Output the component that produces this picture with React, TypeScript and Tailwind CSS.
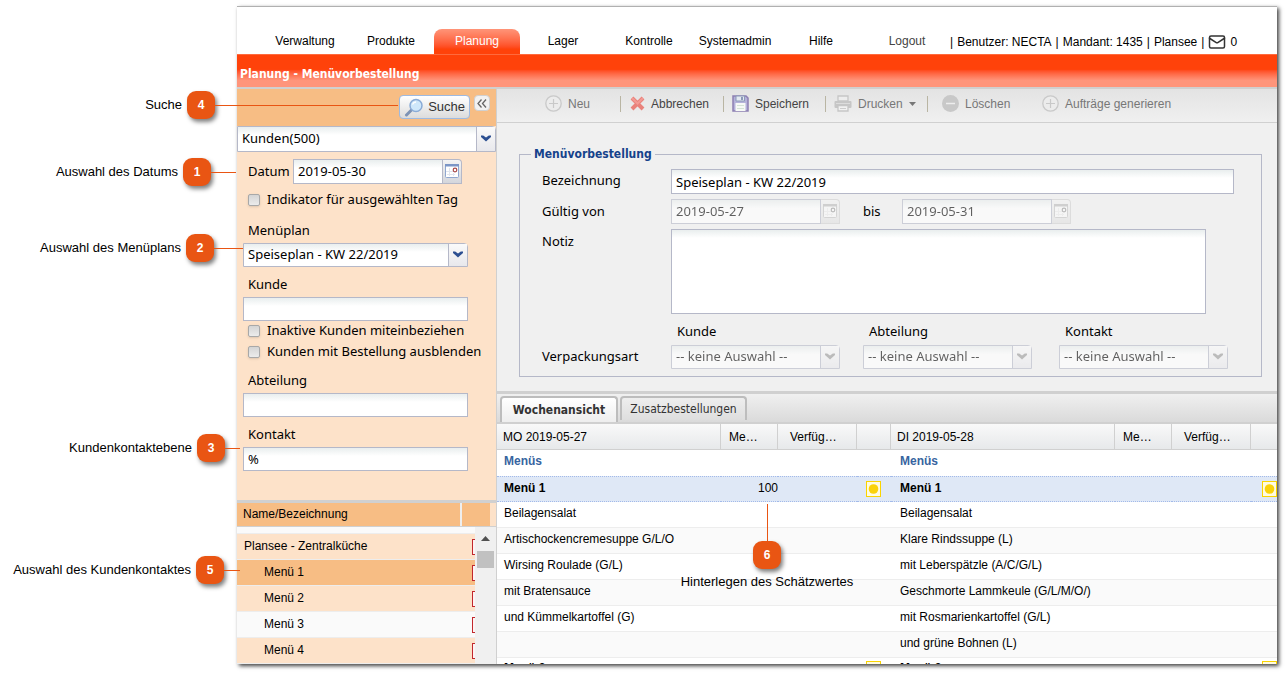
import { Mail } from "lucide-react"
import clsx from "clsx"

const NAV = ["Verwaltung", "Produkte", "Planung", "Lager", "Kontrolle", "Systemadmin", "Hilfe"]

const SESSION = ["|", "Benutzer: NECTA", "|", "Mandant: 1435", "|", "Plansee", "|"]

const MENU_ROWS = [
    ["Beilagensalat", "Beilagensalat"],
    ["Artischockencremesuppe G/L/O", "Klare Rindssuppe (L)"],
    ["Wirsing Roulade (G/L)", "mit Leberspätzle (A/C/G/L)"],
    ["mit Bratensauce", "Geschmorte Lammkeule (G/L/M/O/)"],
    ["und Kümmelkartoffel (G)", "mit Rosmarienkartoffel (G/L)"],
    ["", "und grüne Bohnen (L)"],
]

const CONTACTS = [
    { name: "Plansee - Zentralküche", row: "bg-[#fde2c9]", cell: "pl-[7px]" },
    { name: "Menü 1", row: "bg-[#f7bd84]", cell: "pl-[27px]" },
    { name: "Menü 2", row: "bg-[#fde2c9]", cell: "pl-[27px]" },
    { name: "Menü 3", row: "bg-[#fafafa]", cell: "pl-[27px]" },
    { name: "Menü 4", row: "bg-[#fde2c9]", cell: "pl-[27px]" },
]

const field = "border border-[#b5b8c8] bg-white bg-linear-to-b from-[#e9eeee] to-white to-[8px] px-1 text-black outline-none"

function Chevron() {
    return (
        <svg width="10" height="7" viewBox="0 0 10 7" fill="currentColor">
            <path d="M0 0.500h2.200L5 2.600 7.800 0.500H10v1.400L5 6.500 0 1.900z" />
        </svg>
    )
}

function CalendarIcon() {
    return (
        <svg width="14" height="14" viewBox="0 0 14 14">
            <rect x="0.500" y="0.500" width="13" height="13" rx="1" fill="#fff" stroke="#8fa6cf" />
            <path d="M0 0h14v2.500H0z" fill="#7c96c6" />
            <path d="M4.500 4v8M1 7.500h8M8.500 9v3M2 10.500h8" stroke="#e1e5ee" />
            <circle cx="10" cy="6" r="1.800" fill="#fff" stroke="#a94a4a" strokeWidth="1.200" />
        </svg>
    )
}

function DateField({ id, value, disabled }: { id: string; value: string; disabled?: boolean }) {
    return (
        <div className={clsx("flex h-[25px] w-[169px]", disabled && "opacity-60")}>
            <input id={id} defaultValue={value} disabled={disabled} className={clsx(field, "min-w-0 flex-1")} />
            <button
                type="button"
                aria-label="Kalender"
                disabled={disabled}
                className={clsx(
                    "flex w-[19px] items-start justify-center rounded-tr-sm border border-l-0 border-[#b5b8c8] bg-linear-to-b from-[#f4f4f4] to-[#d4d6dc] pt-1",
                    disabled && "opacity-60 grayscale"
                )}
            >
                <CalendarIcon />
            </button>
        </div>
    )
}

function SelectField({ id, value, className, disabled }: { id: string; value: string; className?: string; disabled?: boolean }) {
    return (
        <div className={clsx("relative h-6", className, disabled && "opacity-60")}>
            <select id={id} aria-label={value} disabled={disabled} className={clsx(field, "h-full w-full appearance-none rounded-tr-sm opacity-100")}>
                <option>{value}</option>
            </select>
            <span
                className={clsx(
                    "pointer-events-none absolute inset-y-px right-px flex w-[19px] items-center justify-center border-l border-[#b5b8c8] bg-linear-to-b from-[#fafafa] to-[#e8e8ec] pb-[2px]",
                    disabled ? "text-[#999]" : "text-[#2c4f91]"
                )}
            >
                <Chevron />
            </span>
        </div>
    )
}

function Check({ label }: { label: string }) {
    return (
        <label className="flex h-[21px] items-center gap-[7px] pb-[2px] pl-[5px] whitespace-nowrap">
            <input
                type="checkbox"
                className="size-3 flex-none appearance-none rounded-xs border border-[#a8a8a8] bg-linear-to-b from-[#d4d4d4] to-[#ececec] shadow-sm"
            />
            {label}
        </label>
    )
}

function FieldLabel({ htmlFor, children }: { htmlFor: string; children: string }) {
    return (
        <label htmlFor={htmlFor} className="mb-[2px] flex h-[21px] items-center pl-[5px]">
            {children}
        </label>
    )
}

function PlusIcon() {
    return (
        <svg width="17" height="17" viewBox="0 0 17 17" fill="none" stroke="#c9c9c9">
            <circle cx="8.500" cy="8.500" r="7.700" strokeWidth="1.300" fill="#ececec" />
            <path d="M8.500 4v9M4 8.500h9" strokeWidth="1.200" />
        </svg>
    )
}

function MinusIcon() {
    return (
        <svg width="17" height="17" viewBox="0 0 17 17">
            <circle cx="8.500" cy="8.500" r="8.500" fill="#c8c8c8" />
            <path d="M4 8.500h9" stroke="#ededed" strokeWidth="1.500" />
        </svg>
    )
}

function CancelIcon() {
    return (
        <svg width="15" height="15" viewBox="0 0 15 15">
            <path d="M2 2l11 11M13 2L2 13" stroke="#e9827b" strokeWidth="4" />
            <path d="M2 2l5.500 5.500L13 2" stroke="#f39a94" strokeWidth="2" fill="none" />
        </svg>
    )
}

function SaveIcon() {
    return (
        <svg width="17" height="17" viewBox="0 0 17 17">
            <path d="M1 1h13l2 2v13H1z" fill="#b5b2da" stroke="#8d80b3" strokeWidth="1.500" />
            <path d="M4 1h8.500v5H4z" fill="#e3e9f1" stroke="#8c9ab8" />
            <path d="M9 2h2v3H9z" fill="#8c9ab8" />
            <path d="M3.500 8h10v8h-10z" fill="#f6f9f6" />
            <path d="M5 10.500h7M5 13.500h7" stroke="#d3e2d5" />
        </svg>
    )
}

function PrintIcon() {
    return (
        <svg width="18" height="17" viewBox="0 0 18 17">
            <path d="M4 1h10v5H4z" fill="#ededed" stroke="#c6c6c6" strokeWidth="1.300" />
            <rect x="0.500" y="6" width="17" height="7" rx="1" fill="#c6c6c6" />
            <path d="M2 8.500h14" stroke="#dcdcdc" />
            <path d="M4 10.500h10V16H4z" fill="#f1f1f1" stroke="#c6c6c6" strokeWidth="1.300" />
            <path d="M6 13.500h6" stroke="#cccccc" />
        </svg>
    )
}

function SearchIcon() {
    return (
        <svg width="20" height="19" viewBox="0 0 20 19">
            <path d="M7.500 12L2.500 17" stroke="#7d93b5" strokeWidth="3" strokeLinecap="round" />
            <circle cx="12" cy="7.500" r="6" fill="#cfe8fb" stroke="#8aabd6" strokeWidth="1.500" />
            <path d="M8.500 6.500a4 4 0 0 1 3.500-2.500" stroke="#fff" strokeWidth="1.300" fill="none" />
        </svg>
    )
}

function Divider() {
    return <span className="h-4 w-px bg-[#b9b5a3]" />
}

function YellowDot() {
    return (
        <svg width="15" height="16" viewBox="0 0 15 16">
            <rect x="0.500" y="0.500" width="14" height="15" fill="#fffbe0" stroke="#fad400" />
            <circle cx="7.500" cy="8" r="4.800" fill="#fad20a" />
        </svg>
    )
}

function Toolbar() {
    const btn = "flex h-full items-center gap-[6px] whitespace-nowrap"
    return (
        <div className="flex h-[34px] flex-none items-center border-b border-[#d0d0d0] bg-linear-to-b from-[#e3e3e3] to-[#f0f0f0] pb-[4px] pl-12 text-[12px] text-[#777]">
            <button type="button" className={clsx(btn, "w-[75px]")}><PlusIcon />Neu</button>
            <Divider />
            <button type="button" className={clsx(btn, "w-[102px] pl-[9px] text-[#444]")}><CancelIcon />Abbrechen</button>
            <Divider />
            <button type="button" className={clsx(btn, "w-[101px] pl-[8px] text-[#444]")}><SaveIcon />Speichern</button>
            <Divider />
            <button type="button" className={clsx(btn, "w-[101px] pl-[8px]")}>
                <PrintIcon />Drucken
                <svg width="7" height="4" viewBox="0 0 7 4" fill="#777"><path d="M0 0h7L3.500 4z" /></svg>
            </button>
            <Divider />
            <button type="button" className={clsx(btn, "w-[114px] pl-[14px]")}><MinusIcon />Löschen</button>
            <button type="button" className={btn}><PlusIcon />Aufträge generieren</button>
        </div>
    )
}

function SearchPanel() {
    return (
        <div className="flex-none bg-[#fde2c9]">
            <div className="flex h-[37px] items-start justify-end gap-[4px] bg-[#f7bd84] pt-[6px] pr-[6px]">
                <button
                    type="button"
                    className="flex h-6 items-center gap-1 rounded-sm border border-[#9ebae1] bg-linear-to-b from-white to-[#dcdcdc] px-1 font-['Liberation_Sans',Arial,sans-serif] text-[13px] text-[#333]"
                >
                    <SearchIcon />Suche
                </button>
                <button
                    type="button"
                    aria-label="Einklappen"
                    className="flex size-4 items-center justify-center rounded-sm border border-[#d0d0d0] bg-[#f2f2f2]"
                >
                    <svg width="10" height="9" viewBox="0 0 10 9" fill="none" stroke="#666" strokeWidth="1.300">
                        <path d="M4.500 0.500l-3.500 4 3.500 4M9 0.500l-3.500 4 3.500 4" />
                    </svg>
                </button>
            </div>
            <SelectField id="filter" value="Kunden(500)" className="h-[26px]" />
            <div className="pt-[7px] pr-7 pb-[29px] pl-[6px]">
                <div className="flex items-center justify-between pr-[6px] pl-[5px]">
                    <label htmlFor="datum">Datum</label>
                    <DateField id="datum" value="2019-05-30" />
                </div>
                <div className="mt-[6px]"><Check label="Indikator für ausgewählten Tag" /></div>
                <div className="mt-[9px]">
                    <FieldLabel htmlFor="menueplan">Menüplan</FieldLabel>
                    <SelectField id="menueplan" value="Speiseplan - KW 22/2019" />
                </div>
                <div className="mt-[7px]">
                    <FieldLabel htmlFor="kunde">Kunde</FieldLabel>
                    <input id="kunde" className={clsx(field, "block h-6 w-full")} />
                </div>
                <Check label="Inaktive Kunden miteinbeziehen" />
                <Check label="Kunden mit Bestellung ausblenden" />
                <div className="mt-[7px]">
                    <FieldLabel htmlFor="abteilung">Abteilung</FieldLabel>
                    <input id="abteilung" className={clsx(field, "block h-6 w-full")} />
                </div>
                <div className="mt-[7px]">
                    <FieldLabel htmlFor="kontakt">Kontakt</FieldLabel>
                    <input id="kontakt" defaultValue="%" className={clsx(field, "block h-6 w-full")} />
                </div>
            </div>
        </div>
    )
}

function ContactList() {
    return (
        <div className="flex min-h-0 flex-1 flex-col border-t-[3px] border-[#d0d0d0] bg-[#fde2c9] font-['Liberation_Sans',Arial,sans-serif] text-[12px]">
            <div className="flex h-6 flex-none items-center border-b border-[#d0d0d0] pr-[6px]">
                <div className="flex h-full flex-1 items-center border-r-2 border-[#eee] bg-[#f7bd84] pb-[2px] pl-[6px]">Name/Bezeichnung</div>
                <div className="h-full w-7 bg-[#f7bd84]" />
            </div>
            <div className="flex min-h-0 flex-1 overflow-hidden">
                <table className="min-w-0 flex-1 border-collapse self-start">
                    <tbody className="block">
                        <tr className="flex h-[7px] border-b border-[#ededed] bg-[#fafafa]">
                            <td className="flex-1" />
                        </tr>
                        {CONTACTS.map((c) => (
                            <tr key={c.name} className={clsx("flex h-[26px] items-center border-b border-[#ededed]", c.row)}>
                                <td className={clsx("flex-1 pb-px", c.cell)}>{c.name}</td>
                                <td className="h-4 w-[3px] border-y border-l border-[#c1272d] bg-[#fdf3f3]" />
                            </tr>
                        ))}
                    </tbody>
                </table>
                <div className="flex w-[21px] flex-col items-center gap-[10px] bg-[#f0f0f0] pt-[9px]">
                    <svg width="9" height="5" viewBox="0 0 9 5" fill="#505050"><path d="M4.500 0L9 5H0z" /></svg>
                    <div className="h-[17px] w-[17px] bg-[#c1c1c1]" />
                </div>
            </div>
        </div>
    )
}

function OrderForm() {
    return (
        <div className="flex-none bg-[#f0f0f0] pt-[23px] pr-[15px] pb-[14px] pl-[22px] font-['Noto_Sans',sans-serif] text-[13px]">
            <fieldset className="border border-[#b5b8c8] pr-[27px] pb-[7px] pl-[22px]">
                <legend className="-ml-[11px] px-[3px] font-['DejaVu_Sans_Condensed','DejaVu_Sans',sans-serif] text-[12px] leading-4 font-bold text-[#15428b]">
                    Menüvorbestellung
                </legend>
                <div className="mt-[7px] grid grid-cols-[129px_1fr] gap-y-[5px]">
                    <label htmlFor="bezeichnung" className="leading-[22px]">Bezeichnung</label>
                    <input id="bezeichnung" defaultValue="Speiseplan - KW 22/2019" className={clsx(field, "h-[25px]")} />
                    <label htmlFor="von" className="leading-6">Gültig von</label>
                    <div className="flex">
                        <DateField id="von" value="2019-05-27" disabled />
                        <label htmlFor="bis" className="w-[62px] pl-[23px] leading-6">bis</label>
                        <DateField id="bis" value="2019-05-31" disabled />
                    </div>
                    <label htmlFor="notiz" className="leading-6">Notiz</label>
                    <textarea id="notiz" className={clsx(field, "mr-7 h-[85px] resize-none")} />
                    <span />
                    <div className="grid h-[21px] grid-cols-[192px_196px_169px] pl-[6px] leading-6">
                        <span>Kunde</span>
                        <span>Abteilung</span>
                        <span>Kontakt</span>
                    </div>
                    <label htmlFor="vp-kunde" className="leading-[22px]">Verpackungsart</label>
                    <div className="grid grid-cols-[192px_196px_169px]">
                        <SelectField id="vp-kunde" value="-- keine Auswahl --" className="w-[169px]" disabled />
                        <SelectField id="vp-abteilung" value="-- keine Auswahl --" className="w-[169px]" disabled />
                        <SelectField id="vp-kontakt" value="-- keine Auswahl --" className="w-[169px]" disabled />
                    </div>
                </div>
            </fieldset>
        </div>
    )
}

function WeekTable() {
    const cell = "border-b border-[#ededed] pb-[3px] whitespace-nowrap"
    return (
        <table className="w-[788px] min-w-full table-fixed border-separate border-spacing-0 text-[12px]">
            <thead>
                <tr className="h-[26px] bg-linear-to-b from-[#f9f9f9] to-[#e6e8ea] text-left">
                    {["MO 2019-05-27", "DI 2019-05-28"].map((day) => [
                        <th key={day} className="w-[224px] border-r border-b border-[#d0d0d0] pl-[6px] font-normal">{day}</th>,
                        <th key={day + "m"} className="w-[57px] border-r border-b border-[#d0d0d0] pl-2 font-normal">Me…</th>,
                        <th key={day + "v"} className="w-[79px] border-r border-b border-[#d0d0d0] pl-3 font-normal">Verfüg…</th>,
                        <th key={day + "s"} className="w-[34px] border-r border-b border-[#d0d0d0]" />,
                    ])}
                </tr>
            </thead>
            <tbody>
                <tr className="h-[26px] bg-white font-bold text-[#3764a0]">
                    <td colSpan={4} className="pb-1 pl-[7px]">Menüs</td>
                    <td colSpan={4} className="pb-1 pl-[9px]">Menüs</td>
                </tr>
                <tr className="h-[26px] bg-[#dfe8f6] *:border-y *:border-dotted *:border-[#a3bae9]">
                    <td className="pb-[3px] pl-[7px] font-bold">Menü 1</td>
                    <td className="pb-[3px] text-right">100</td>
                    <td />
                    <td className="pl-[9px]"><YellowDot /></td>
                    <td className="pb-[3px] pl-[9px] font-bold">Menü 1</td>
                    <td />
                    <td />
                    <td className="pl-[11px]"><YellowDot /></td>
                </tr>
                {MENU_ROWS.map(([mo, di]) => (
                    <tr key={di} className="h-[26px] even:bg-[#fafafa]">
                        <td colSpan={4} className={clsx(cell, "pl-[7px]")}>{mo}</td>
                        <td colSpan={4} className={clsx(cell, "pl-[9px]")}>{di}</td>
                    </tr>
                ))}
                <tr className="h-[26px] bg-white align-top *:pt-[3px] *:leading-[14px]">
                    <td className="pl-[7px] font-bold">Menü 2</td>
                    <td />
                    <td />
                    <td className="pl-[9px]"><YellowDot /></td>
                    <td className="pl-[9px] font-bold">Menü 2</td>
                    <td />
                    <td />
                    <td className="pl-[11px]"><YellowDot /></td>
                </tr>
            </tbody>
        </table>
    )
}

function Badge({ n }: { n: number }) {
    return (
        <span className="flex size-7 flex-none items-center justify-center rounded-[9px] bg-[#e95513] text-[12px] font-bold text-white shadow-[2px_3px_4px_rgba(0,0,0,0.5)]">
            {n}
        </span>
    )
}

const CALLOUTS = [
    { n: 4, text: "Suche", box: "top-[91px] w-[398px]", line: "w-[183px]" },
    { n: 1, text: "Auswahl des Datums", box: "top-[158px] w-[236px]", line: "w-[25px]" },
    { n: 2, text: "Auswahl des Menüplans", box: "top-[234px] w-[243px]", line: "w-[29px]" },
    { n: 3, text: "Kundenkontaktebene", box: "top-[434px] w-[240px]", line: "w-[15px]" },
    { n: 5, text: "Auswahl des Kundenkontaktes", box: "top-[556px] w-[240px]", line: "w-[16px]" },
]

function Callouts() {
    return (
        <div className="pointer-events-none text-[13px] text-black">
            {CALLOUTS.map((c) => (
                <div key={c.n} className={clsx("absolute left-0 flex h-7 items-center justify-end whitespace-nowrap", c.box)}>
                    <span className="mr-[5px]">{c.text}</span>
                    <Badge n={c.n} />
                    <span className={clsx("h-px flex-none bg-[#e95513]", c.line)} />
                </div>
            ))}
            <div className="absolute top-[504px] left-[667px] flex w-[200px] flex-col items-center whitespace-nowrap">
                <span className="h-[37px] w-px bg-[#e95513]" />
                <Badge n={6} />
                <span className="mt-1 leading-[18px]">Hinterlegen des Schätzwertes</span>
            </div>
        </div>
    )
}

export default function App() {
    return (
        <div className="relative h-screen overflow-hidden bg-white pt-[6px] pr-[9px] pb-[9px] pl-[237px] font-['Liberation_Sans',Arial,sans-serif] text-black">
            <div className="flex h-full flex-col overflow-hidden border-t border-[#b0b0b0] bg-white shadow-[2px_2px_4px_rgba(0,0,0,0.75)]">
                <header className="flex h-[47px] flex-none items-end pl-[25px] text-[12px] whitespace-nowrap">
                    <nav className="flex">
                        {NAV.map((item) => (
                            <a
                                key={item}
                                href="#"
                                className={clsx(
                                    "flex h-[25px] w-[86px] items-center justify-center pb-[2px]",
                                    item === "Planung" && "rounded-t-lg bg-linear-to-b from-[#ff9478] to-[#ff420a] to-80% text-white"
                                )}
                            >
                                {item}
                            </a>
                        ))}
                        <a href="#" className="flex h-[25px] w-[86px] items-center justify-center pb-[2px] text-[#444]">Logout</a>
                    </nav>
                    <div className="flex h-[25px] items-center gap-1">
                        {SESSION.map((part, i) => (
                            <span key={i}>{part}</span>
                        ))}
                        <Mail className="size-[18px] text-[#333]" />
                        <span>0</span>
                    </div>
                </header>
                <h1 className="flex h-[33px] flex-none items-center border-t border-[#ff6a3d] bg-linear-to-b from-[#ff420a] from-45% to-[#ff957b] to-80% pt-[6px] pl-[3px] font-['DejaVu_Sans_Condensed','DejaVu_Sans',sans-serif] text-[12px] font-bold text-white">
                    Planung - Menüvorbestellung
                </h1>
                <div className="flex min-h-0 flex-1 border-t-2 border-[#d0d0d0]">
                    <aside className="flex w-[260px] flex-none flex-col border-r border-[#d0d0d0] font-['Noto_Sans',sans-serif] text-[13px]">
                        <SearchPanel />
                        <ContactList />
                    </aside>
                    <main className="flex min-w-0 flex-1 flex-col overflow-hidden">
                        <Toolbar />
                        <OrderForm />
                        <div
                            role="tablist"
                            className="flex h-[33px] flex-none items-end gap-[2px] border-t-[3px] border-b-2 border-[#d0d0d0] bg-linear-to-b from-[#f0f0f0] to-[#dadada] pl-[3px] font-['DejaVu_Sans_Condensed','DejaVu_Sans',sans-serif] text-[12px] text-[#333]"
                        >
                            <button type="button" role="tab" aria-selected="true" className="h-[26px] w-[118px] rounded-t border-2 border-b-0 border-[#bdbdbd] bg-linear-to-b from-white to-[#eee] font-bold">
                                Wochenansicht
                            </button>
                            <button type="button" role="tab" aria-selected="false" className="mb-[2px] h-6 w-[127px] rounded-t border-2 border-b-0 border-[#bdbdbd] bg-linear-to-b from-[#eee] to-[#dedede]">
                                Zusatzbestellungen
                            </button>
                        </div>
                        <div className="min-h-0 flex-1 overflow-hidden">
                            <WeekTable />
                        </div>
                    </main>
                </div>
            </div>
            <Callouts />
        </div>
    )
}
